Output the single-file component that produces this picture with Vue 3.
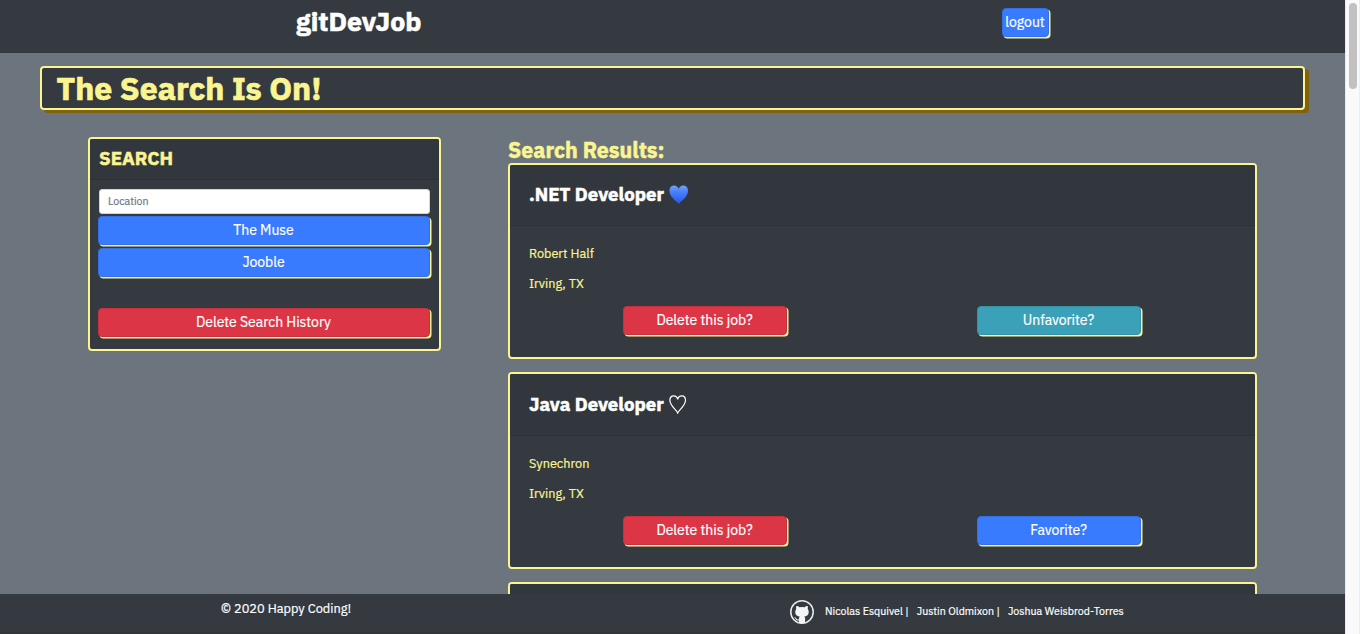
<script setup>
const jobs = [
  { title: '.NET Developer', company: 'Robert Half', place: 'Irving, TX', favorite: true },
  { title: 'Java Developer', company: 'Synechron', place: 'Irving, TX', favorite: false },
  { title: '' }
]
</script>

<template>
  <div class="window">
    <div class="page">
      <header class="topbar">
        <span class="brand">gitDevJob</span>
        <button class="btn blue logout">logout</button>
      </header>
      <main class="content">
        <h1 class="banner">The Search Is On!</h1>
        <div class="columns">
          <aside class="card search">
            <h2 class="search-head">SEARCH</h2>
            <div class="search-body">
              <input class="field" placeholder="Location" />
              <button class="btn blue">The Muse</button>
              <button class="btn blue">Jooble</button>
              <button class="btn red history">Delete Search History</button>
            </div>
          </aside>
          <section class="results">
            <h2 class="results-title">Search Results:</h2>
            <article v-for="(job, i) in jobs" :key="i" class="card job">
              <div class="job-head">
                <template v-if="job.title">
                  <h3>{{ job.title }}</h3>
                  <svg v-if="job.favorite" class="heart" viewBox="0 0 20 19">
                    <defs>
                      <linearGradient id="heartFill" x1="0" y1="0" x2="0" y2="1">
                        <stop offset="0" stop-color="#70a5fb" />
                        <stop offset=".35" stop-color="#4b7ffa" />
                        <stop offset="1" stop-color="#2456ee" />
                      </linearGradient>
                    </defs>
                    <path fill="url(#heartFill)" d="M9.700 18.800C7.700 16.700.4 11.500.4 5.700.4 2.600 2.300.4 5 .4 7.300.4 9 1.700 9.700 3.700 10.400 1.700 12.100.4 14.400.4c2.700 0 4.600 2.200 4.600 5.300C19 11.500 11.700 16.700 9.700 18.800Z" />
                  </svg>
                  <svg v-else class="heart" viewBox="0 0 20 19">
                    <path fill="none" stroke="#fff" stroke-width="1.200" d="M8.700 18C7.300 14.300.9 11.200.9 5.300.9 2.600 2.500.9 4.700.9 6.700.9 8.200 2.200 8.700 4.400 9.200 2.200 10.700.9 12.700.9c2.200 0 3.800 1.700 3.800 4.400C16.500 11.200 10.100 14.300 8.700 18Z" />
                  </svg>
                </template>
              </div>
              <div v-if="job.title" class="job-body">
                <p>{{ job.company }}</p>
                <p>{{ job.place }}</p>
                <div class="actions">
                  <button class="btn red">Delete this job?</button>
                  <button class="btn" :class="job.favorite ? 'teal' : 'blue'">{{ job.favorite ? 'Unfavorite?' : 'Favorite?' }}</button>
                </div>
              </div>
            </article>
          </section>
        </div>
      </main>
      <footer class="footer">
        <span class="copy">© 2020 Happy Coding!</span>
        <svg class="github" viewBox="0 0 24 24">
          <circle cx="12" cy="12" r="11.200" fill="none" stroke="#eceded" stroke-width="1.500" />
          <path fill="#f4f5f6" d="M6.400 6c1.200 0 2.300.6 3.100 1.200a11 11 0 0 1 5 0C15.300 6.600 16.400 6 17.600 6c.4 1 .4 2.200.1 2.900 1.900 2.300 1.400 7.200-3.400 7.700.6.600.8 1.200.8 2v4.200q-3.100 1-6.200 0v-2.400c-2.400.5-3-.8-3.600-1.900-.3-.5-.8-.8-1-1.100 1.700-.4 1.900 1.900 3.400 2 .5 0 .9 0 1.200-.2 0-1 .3-1.900.8-2.600-4.800-.5-5.300-5.400-3.400-7.700C6 8.200 6 7 6.400 6Z" />
        </svg>
        <div class="names"><span>Nicolas Esquivel |</span><span>Justin Oldmixon |</span><span>Joshua Weisbrod-Torres</span></div>
      </footer>
    </div>
    <div class="scrollbar"><div class="thumb"></div></div>
  </div>
</template>

<style>
html, body { margin: 0; overflow: hidden; }
</style>

<style scoped>
* { box-sizing: border-box; }
.window {
  display: flex; width: 1360px; height: 634px; overflow: hidden;
  font-family: "IBM Plex Sans", "Noto Sans", "Liberation Sans", sans-serif;
  white-space: nowrap; -webkit-text-stroke: .2px;
}
.page { width: 1345px; height: 634px; display: flex; flex-direction: column; background: #6c757d; }
.topbar { flex: none; height: 53px; background: #343a40; display: flex; align-items: flex-start; padding: 8px 295px 0 296px; justify-content: space-between; }
.brand { color: #fff; font-size: 26.650px; font-weight: 700; line-height: 26px; -webkit-text-stroke: .6px; }
h1, h2, h3, p { margin: 0; }
h1, h2, h3 { font-weight: 700; -webkit-text-stroke: .5px; }
.btn {
  display: flex; align-items: center; justify-content: center; height: 29px; padding: 0 1px 1px 0; border-radius: 4px;
  color: #fff; font-family: inherit; font-size: 14px; letter-spacing: -.05px; line-height: 20px; border: 1px solid;
  box-shadow: 1.500px 1.500px 0 #faf491;
}
.blue { background: #397bff; border-color: #336fe5; }
.red { background: #dc3545; border-color: #c9303e; }
.teal { background: #3aa1b8; border-color: #3592a7; }
.logout { width: 47px; margin-right: 1px; }
.content { flex: 1; min-height: 0; overflow: hidden; padding: 13px 40px 0; }
.banner {
  height: 44px; border: 2px solid #faf491; border-radius: 4px; background: #343a40; box-shadow: 4px 3px 0 #80610d;
  padding-left: 14.500px; color: #faf491; font-size: 32px; line-height: 41px; -webkit-text-stroke: .7px;
}
.columns { display: flex; align-items: flex-start; margin: 27px 48px 0; justify-content: space-between; }
.card { border: 2px solid #faf491; border-radius: 4px; background: #343a40; overflow: hidden; }
.search { width: 353px; height: 214px; }
.search-head { height: 41px; padding-left: 9px; background: #32373d; border-bottom: 1px solid #2d3237; color: #faf491; font-size: 18.700px; line-height: 39px; }
.search-body { display: flex; flex-direction: column; padding: 9px 9px 0 8px; gap: 3px; }
.field { height: 25px; margin: 0 0 -1px 1px; border: 1px solid #ced4da; border-radius: 3px; padding: 0 8px 1px; font-family: inherit; font-size: 10.650px; color: #495057; }
.field::placeholder { color: #6c757d; opacity: 1; }
.history { margin-top: 28px; }
.results { width: 749px; }
.results-title { height: 26px; color: #faf491; font-size: 21.350px; line-height: 26px; }
.job { height: 196px; margin-bottom: 13px; }
.job + .job { height: 197px; }
.job-head { height: 61px; display: flex; align-items: center; padding: 0 19px 2px; background: #32373d; border-bottom: 1px solid #2d3237; gap: 5px; }
.job + .job .job-head { height: 62px; padding-bottom: 1px; }
.job-head h3 { color: #fff; font-size: 18.650px; line-height: 24px; }
.heart { width: 20px; height: 19px; }
.job-body { padding: 20px 19px 0; color: #faf491; font-size: 12.700px; }
.job-body p { height: 30px; line-height: 15px; }
.actions { display: flex; justify-content: space-between; padding: 0 95px 0 94px; }
.actions .btn { width: 164px; }
.footer { flex: none; height: 40px; background: #343a40; border-bottom: 2px solid #32363b; color: #fff; display: flex; align-items: flex-start; padding: 0 0 0 221px; }
.copy { width: 569px; font-size: 12.800px; line-height: 30px; }
.github { width: 24px; height: 24px; margin-top: 6px; }
.names { display: flex; gap: 8px; margin-left: 11px; font-size: 10.650px; line-height: 34px; }
.scrollbar { width: 15px; background: #fafafa; border-left: 1px solid #ebebeb; border-right: 1px solid #ededed; padding: 3px 2px 0 3px; }
.thumb { height: 86px; width: 8px; border-radius: 4px; background: #c1c1c1; }
</style>
